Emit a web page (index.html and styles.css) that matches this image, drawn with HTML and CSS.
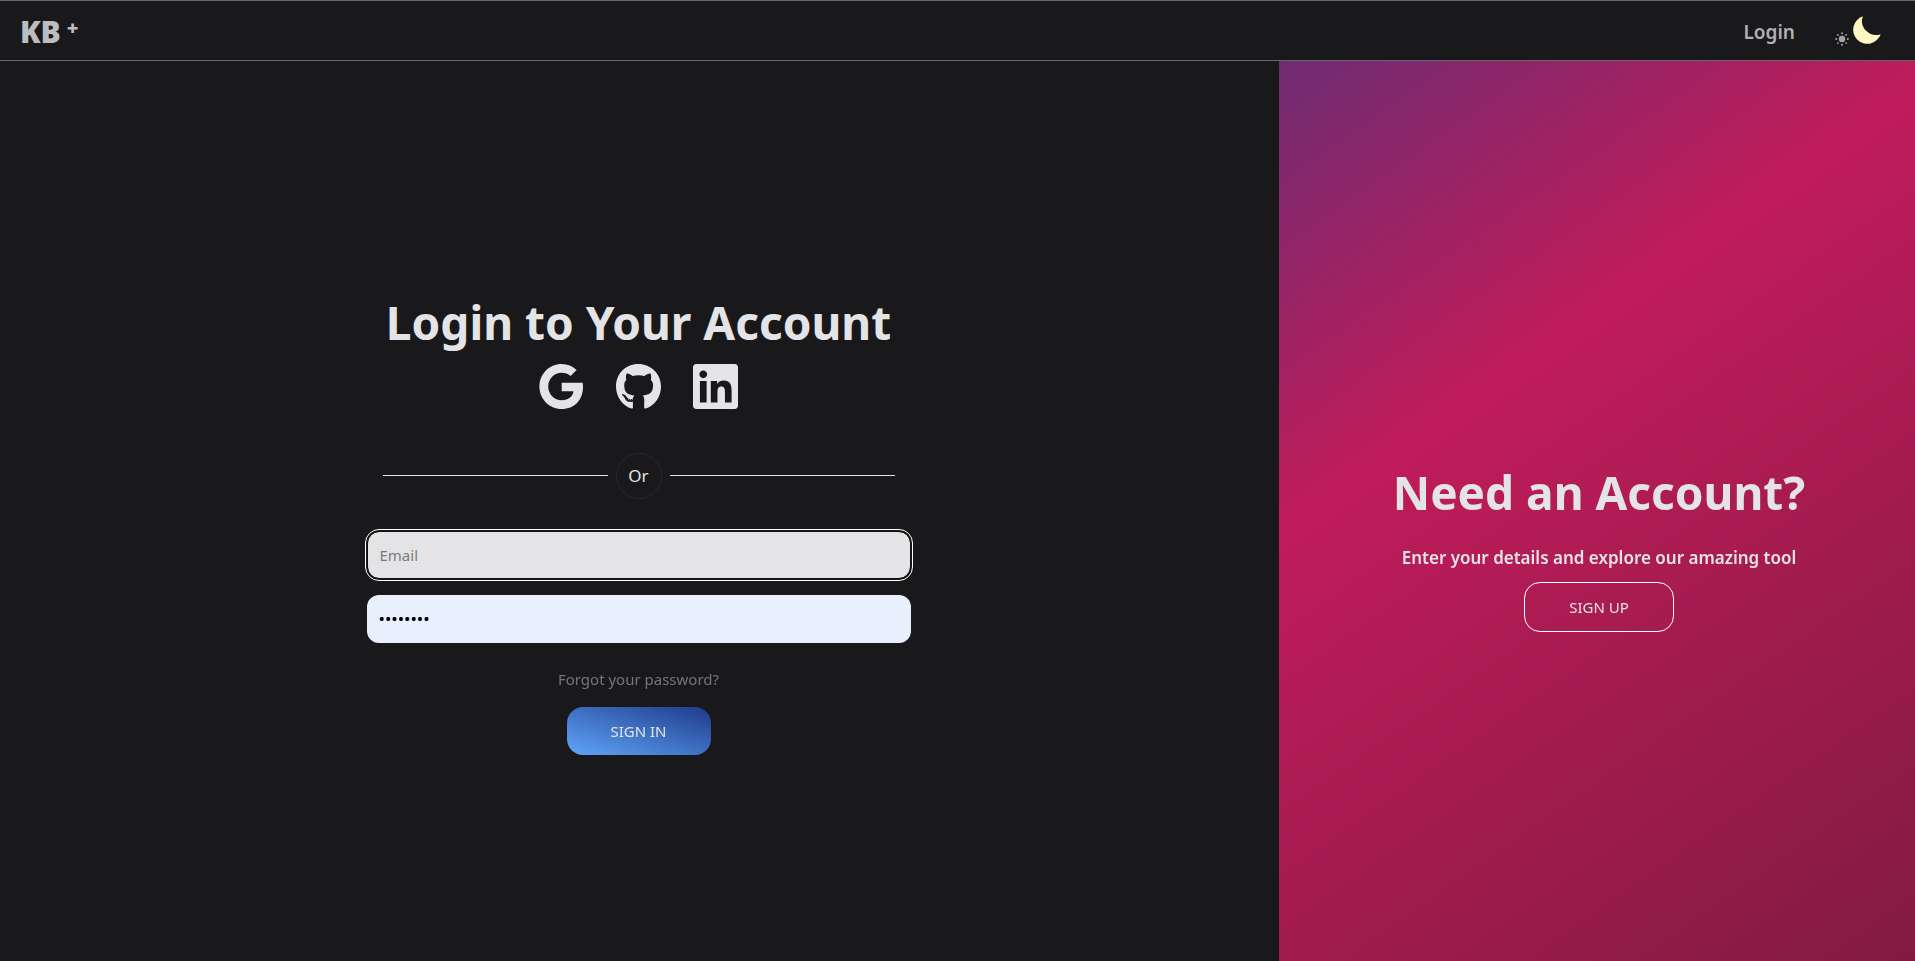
FILE: index.html
```html
<!DOCTYPE html>
<html lang="en">
<head>
<meta charset="utf-8">
<title>KB+ Login</title>
<link rel="stylesheet" href="styles.css">
</head>
<body>
<header class="navbar">
  <a class="brand" href="#">KB<sup class="brand-plus">+</sup></a>
  <nav class="nav-links">
    <a class="nav-login" href="#">Login</a>
    <button class="theme-toggle" type="button" aria-label="Toggle theme">
      <svg class="icon-sun" viewBox="0 0 14 14" aria-hidden="true">
        <circle cx="7" cy="7" r="3.200"/>
        <g><circle cx="7" cy="1.200" r="1"/><circle cx="7" cy="12.800" r="1"/><circle cx="1.200" cy="7" r="1"/><circle cx="12.800" cy="7" r="1"/><circle cx="2.900" cy="2.900" r=".9"/><circle cx="11.100" cy="2.900" r=".9"/><circle cx="2.900" cy="11.100" r=".9"/><circle cx="11.100" cy="11.100" r=".9"/></g>
      </svg>
      <svg class="icon-moon" viewBox="0 0 27 27" aria-hidden="true"><path d="M9.500 .3A13.600 13.600 0 1 0 26.700 17.500A13.500 13.500 0 0 1 9.500 .3Z"/></svg>
    </button>
  </nav>
</header>
<main class="page">
  <section class="login">
    <h1 class="title">Login to Your Account</h1>
    <div class="socials">
      <a class="social" href="#" aria-label="Sign in with Google"><svg viewBox="0 0 45 45"><path d="M37.600 6.100 31.600 12.100C29 9.700 26 8.700 22.700 8.700 15.200 8.700 9.200 14.900 9.200 22.500S15.200 36.300 22.700 36.300C29.500 36.300 33.600 32.600 34.500 27.300H22.700V18.800H43.600C43.900 20.200 44 21.500 44 23 44 36 35.400 45 22.700 45 10.300 45 .4 35 .4 22.500S10.300 0 22.700 0C28.600 0 33.600 2.200 37.600 6.100Z"/></svg></a>
      <a class="social" href="#" aria-label="Sign in with GitHub"><svg viewBox="0 8 496 488" preserveAspectRatio="none"><path d="M165.900 397.400c0 2-2.300 3.600-5.200 3.600-3.300.3-5.600-1.300-5.600-3.600 0-2 2.300-3.600 5.200-3.600 3-.3 5.600 1.300 5.600 3.600zm-31.100-4.500c-.7 2 1.300 4.300 4.300 4.900 2.600 1 5.600 0 6.200-2s-1.300-4.300-4.300-5.200c-2.600-.7-5.500.3-6.200 2.300zm44.200-1.700c-2.900.7-4.900 2.600-4.600 4.900.3 2 2.900 3.300 5.900 2.600 2.900-.7 4.900-2.600 4.600-4.600-.3-1.900-3-3.200-5.900-2.900zM244.800 8C106.100 8 0 113.300 0 252c0 110.900 69.800 205.800 169.500 239.200 12.800 2.300 17.300-5.600 17.300-12.100 0-6.200-.3-40.400-.3-61.400 0 0-70 15-84.700-29.800 0 0-11.400-29.100-27.800-36.600 0 0-22.900-15.700 1.600-15.400 0 0 24.900 2 38.600 25.800 21.900 38.600 58.600 27.500 72.900 20.900 2.300-16 8.800-27.100 16-33.700-55.900-6.200-112.300-14.300-112.300-110.500 0-27.500 7.600-41.300 23.600-58.900-2.600-6.500-11.100-33.300 2.600-67.900 20.900-6.500 69 27 69 27 20-5.600 41.500-8.500 62.800-8.500s42.800 2.900 62.800 8.500c0 0 48.100-33.600 69-27 13.700 34.700 5.200 61.400 2.600 67.900 16 17.700 25.800 31.500 25.800 58.900 0 96.500-58.900 104.200-114.800 110.500 9.200 7.900 17 22.900 17 46.400 0 33.700-.3 75.400-.3 83.600 0 6.500 4.600 14.400 17.300 12.100C428.200 457.800 496 362.900 496 252 496 113.300 383.500 8 244.800 8z"/></svg></a>
      <a class="social" href="#" aria-label="Sign in with LinkedIn"><svg viewBox="0 32 448 448"><path d="M416 32H31.900C14.300 32 0 46.500 0 64.300v383.400C0 465.500 14.300 480 31.900 480H416c17.600 0 32-14.500 32-32.300V64.300c0-17.800-14.400-32.300-32-32.300zM135.400 416H69V202.200h66.500V416zm-33.200-243c-21.300 0-38.500-17.300-38.500-38.500S80.900 96 102.200 96c21.200 0 38.500 17.300 38.500 38.500 0 21.300-17.200 38.500-38.500 38.500zm282.100 243h-66.400V312c0-24.800-.5-56.700-34.500-56.700-34.600 0-39.900 27-39.900 54.900V416h-66.400V202.200h63.700v29.200h.9c8.900-16.800 30.600-34.500 62.900-34.500 67.200 0 79.700 44.300 79.700 101.900V416z"/></svg></a>
    </div>
    <div class="divider"><span class="or">Or</span></div>
    <form class="form">
      <input class="field field-email" type="email" placeholder="Email" aria-label="Email" autofocus>
      <input class="field field-password" type="password" value="password" aria-label="Password">
      <a class="forgot" href="#">Forgot your password?</a>
      <button class="btn btn-signin" type="submit">SIGN IN</button>
    </form>
  </section>
  <aside class="signup">
    <h2 class="title">Need an Account?</h2>
    <p class="lead">Enter your details and explore our amazing tool</p>
    <button class="btn btn-signup" type="button">SIGN UP</button>
  </aside>
</main>
</body>
</html>
```
FILE: styles.css
```css
* { box-sizing: border-box; }
body {
  margin: 0;
  min-height: 100vh;
  display: flex;
  flex-direction: column;
  background: #19191b;
  color: #e4e4e6;
  font-family: "Noto Sans", "Open Sans", sans-serif;
  font-size: 15px;
}
a { color: inherit; text-decoration: none; }
.navbar {
  display: flex;
  align-items: center;
  justify-content: space-between;
  height: 61px;
  padding: 2px 34px 0 20px;
  border-top: 1px solid #67676a;
  border-bottom: 1px solid #67676a;
}
.brand {
  display: flex;
  gap: 6px;
  color: #bdbdc0;
  font-family: "Open Sans", "Noto Sans", sans-serif;
  font-size: 30px;
  font-weight: 800;
  line-height: 40px;
}
.brand-plus { font-size: 20px; line-height: 32px; }
.nav-links { display: flex; align-items: center; gap: 40px; }
.nav-login { color: #b0b0b4; font-size: 19px; font-weight: 600; line-height: 28px; }
.theme-toggle {
  display: flex;
  align-items: flex-end;
  gap: 4px;
  padding: 0 0 4px;
  border: 0;
  background: none;
}
.icon-sun { width: 14px; height: 14px; margin-bottom: -2px; fill: #a5a5ac; }
.icon-moon { width: 28px; height: 28px; fill: #fff6c4; }
.page { flex: 1; display: grid; grid-template-columns: 1279fr 636fr; }
.login, .signup { display: flex; flex-direction: column; align-items: center; justify-content: center; }
.login { padding: 18px 2px 0 0; }
.title { margin: 0; font-size: 46px; font-weight: 700; line-height: 72px; }
.socials { display: flex; gap: 32px; margin-top: 6px; }
.social { display: flex; }
.social svg { width: 45px; height: 45px; fill: #e4e4e6; }
.divider {
  display: flex;
  align-items: center;
  gap: 8px;
  width: 512px;
  max-width: 100%;
  margin: 44px 0 32px;
}
.divider::before, .divider::after { content: ""; flex: 1; height: 1px; background: #e4e4e6; }
.or {
  display: grid;
  place-items: center;
  width: 46px;
  height: 46px;
  border: 1px solid #29292c;
  border-radius: 50%;
  font-size: 17px;
}
.form { display: flex; flex-direction: column; align-items: center; width: 544px; max-width: 100%; }
.field {
  width: 100%;
  height: 48px;
  padding: 0 12px;
  border: 0;
  border-radius: 12px;
  font: inherit;
  color: #000;
}
.field-email { margin-bottom: 16px; background: #e4e4e6; background-clip: padding-box; border: 1px solid #101010; }
.field-email:focus { outline: 1px solid #fff; outline-offset: 1px; }
.field-email::placeholder { color: #7a7a80; }
.field-password { background: #e8f0fe; font-size: 17px; }
.forgot { margin: 24px 0 16px; color: #74747a; line-height: 24px; }
.btn { height: 48px; border: 0; border-radius: 16px; color: #e4e4e6; font: inherit; }
.btn-signin { width: 144px; background: linear-gradient(to top right, #60a5fa, #1e3a8a); }
.signup { padding: 66px 0 0 4px; background: linear-gradient(145deg, #6f2c73, #c01c59 35%, #811b41); }
.lead { margin: 16px 0 10px; font-size: 17px; font-weight: 600; line-height: 28px; }
.btn-signup { width: 150px; height: 50px; border: 1px solid #fff; background: transparent; }
```
